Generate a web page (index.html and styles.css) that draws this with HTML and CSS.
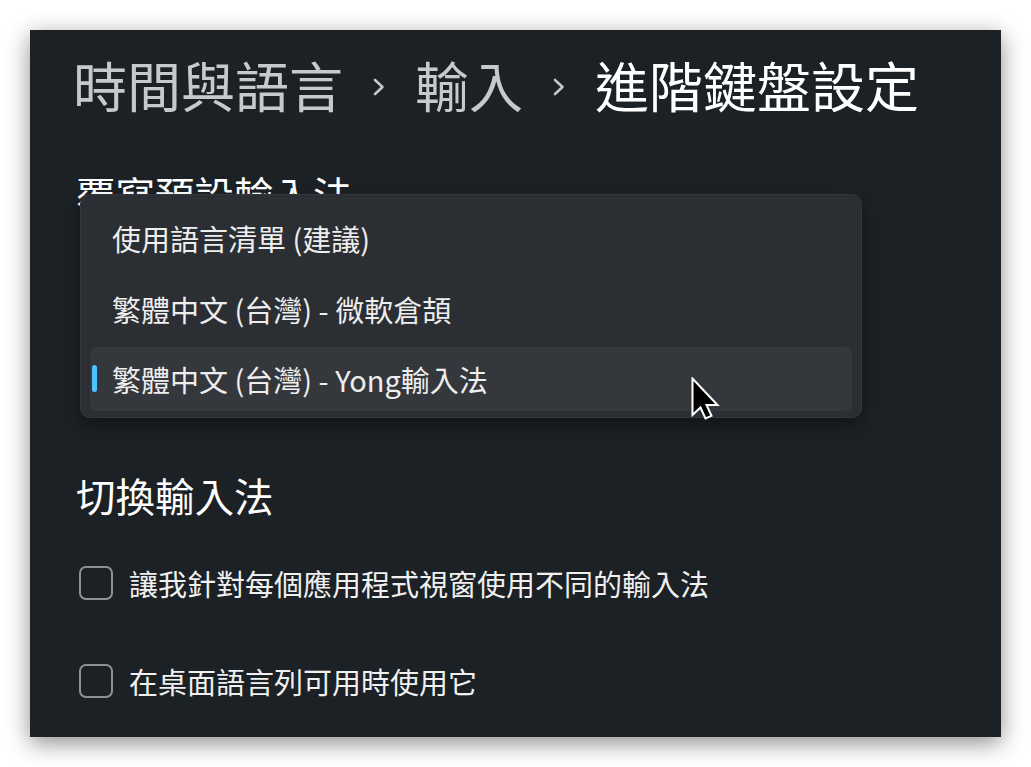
FILE: index.html
```html
<!DOCTYPE html>
<html lang="zh-Hant">
<head>
<meta charset="utf-8">
<title>進階鍵盤設定</title>
<link rel="stylesheet" href="styles.css">
</head>
<body>
<div class="window">
  <h1 class="breadcrumb">
    <span class="crumb">時間與語言</span>
    <svg class="chev" width="12" height="18" viewBox="0 0 12 18"><path d="M2 2 L9.5 9 L2 16" fill="none" stroke="#c4c6c7" stroke-width="2.6" stroke-linecap="round" stroke-linejoin="round"/></svg>
    <span class="crumb">輸入</span>
    <svg class="chev" width="12" height="18" viewBox="0 0 12 18"><path d="M2 2 L9.5 9 L2 16" fill="none" stroke="#c4c6c7" stroke-width="2.6" stroke-linecap="round" stroke-linejoin="round"/></svg>
    <span class="crumb current">進階鍵盤設定</span>
  </h1>

  <h2 class="section-title first">覆寫預設輸入法</h2>
  <div class="combo">
    <ul class="flyout">
      <li class="option">使用語言清單 (建議)</li>
      <li class="option">繁體中文 (台灣) - 微軟倉頡</li>
      <li class="option selected"><span class="accent"></span>繁體中文 (台灣) - Yong輸入法</li>
    </ul>
  </div>

  <h2 class="section-title">切換輸入法</h2>
  <label class="check-row"><span class="box"></span><span class="check-label">讓我針對每個應用程式視窗使用不同的輸入法</span></label>
  <label class="check-row second"><span class="box"></span><span class="check-label">在桌面語言列可用時使用它</span></label>

  <svg class="cursor" width="30" height="44" viewBox="0 0 30 44"><path d="M1.5 1.5 L1.5 38 L9.5 30.5 L14.5 41.5 L20.5 38.8 L15.5 28 L26.5 28 Z" fill="#000" stroke="#fff" stroke-width="2" stroke-linejoin="miter"/></svg>
</div>
</body>
</html>
```
FILE: styles.css
```css
html, body {
  margin: 0;
  padding: 0;
  background: #ffffff;
}
body {
  font-family: "Noto Sans CJK TC", "Noto Sans", sans-serif;
  width: 1031px;
  height: 767px;
  overflow: hidden;
}
.window {
  position: relative;
  margin: 30px 0 0 30px;
  width: 971px;
  height: 707px;
  box-sizing: border-box;
  padding: 23px 0 0 43px;
  background: #1c2125;
  box-shadow: 0 6px 22px rgba(0, 0, 0, 0.45);
  overflow: hidden;
  color: #ffffff;
}
.breadcrumb {
  margin: 0;
  display: flex;
  align-items: center;
  height: 64px;
  font-size: 54px;
  line-height: 64px;
  font-weight: 400;
}
.crumb { color: #c8c9ca; }
.crumb.current { color: #ffffff; }
.chev {
  margin: 4px 30px 0 30px;
  flex: none;
}
.section-title {
  margin: 0 0 0 3px;
  font-size: 39.5px;
  line-height: 48px;
  font-weight: 400;
  color: #ffffff;
}
.section-title.first { margin-top: 53px; }
.combo {
  position: relative;
  height: 253px;
}
.flyout {
  position: absolute;
  left: 7px;
  top: -24px;
  width: 782px;
  height: 224px;
  box-sizing: border-box;
  margin: 0;
  padding: 11px 9px 6px;
  list-style: none;
  background: #2b2f33;
  border: 1px solid #34383c;
  border-radius: 10px;
  box-shadow: 0 8px 16px rgba(0, 0, 0, 0.35);
  display: flex;
  flex-direction: column;
  gap: 7px;
}
.option {
  position: relative;
  height: 64px;
  display: flex;
  align-items: center;
  padding-left: 22px;
  border-radius: 6px;
  font-size: 29px;
  color: #eeeeee;
}
.option.selected { background: #34383c; }
.accent {
  position: absolute;
  left: 2px;
  top: 18px;
  width: 5px;
  height: 27px;
  border-radius: 3px;
  background: #4cc2ff;
}
.section-title + .check-row { margin-top: 47px; }
.check-row {
  display: flex;
  align-items: center;
  margin-left: 6px;
  height: 34px;
}
.check-row.second { margin-top: 64px; }
.box {
  flex: none;
  width: 34px;
  height: 34px;
  box-sizing: border-box;
  border: 2px solid #8e9194;
  border-radius: 7px;
  background: #1c2125;
}
.check-label {
  margin-left: 16px;
  font-size: 29px;
  color: #f0f0f0;
}
.cursor {
  position: absolute;
  left: 661px;
  top: 347px;
}
```
